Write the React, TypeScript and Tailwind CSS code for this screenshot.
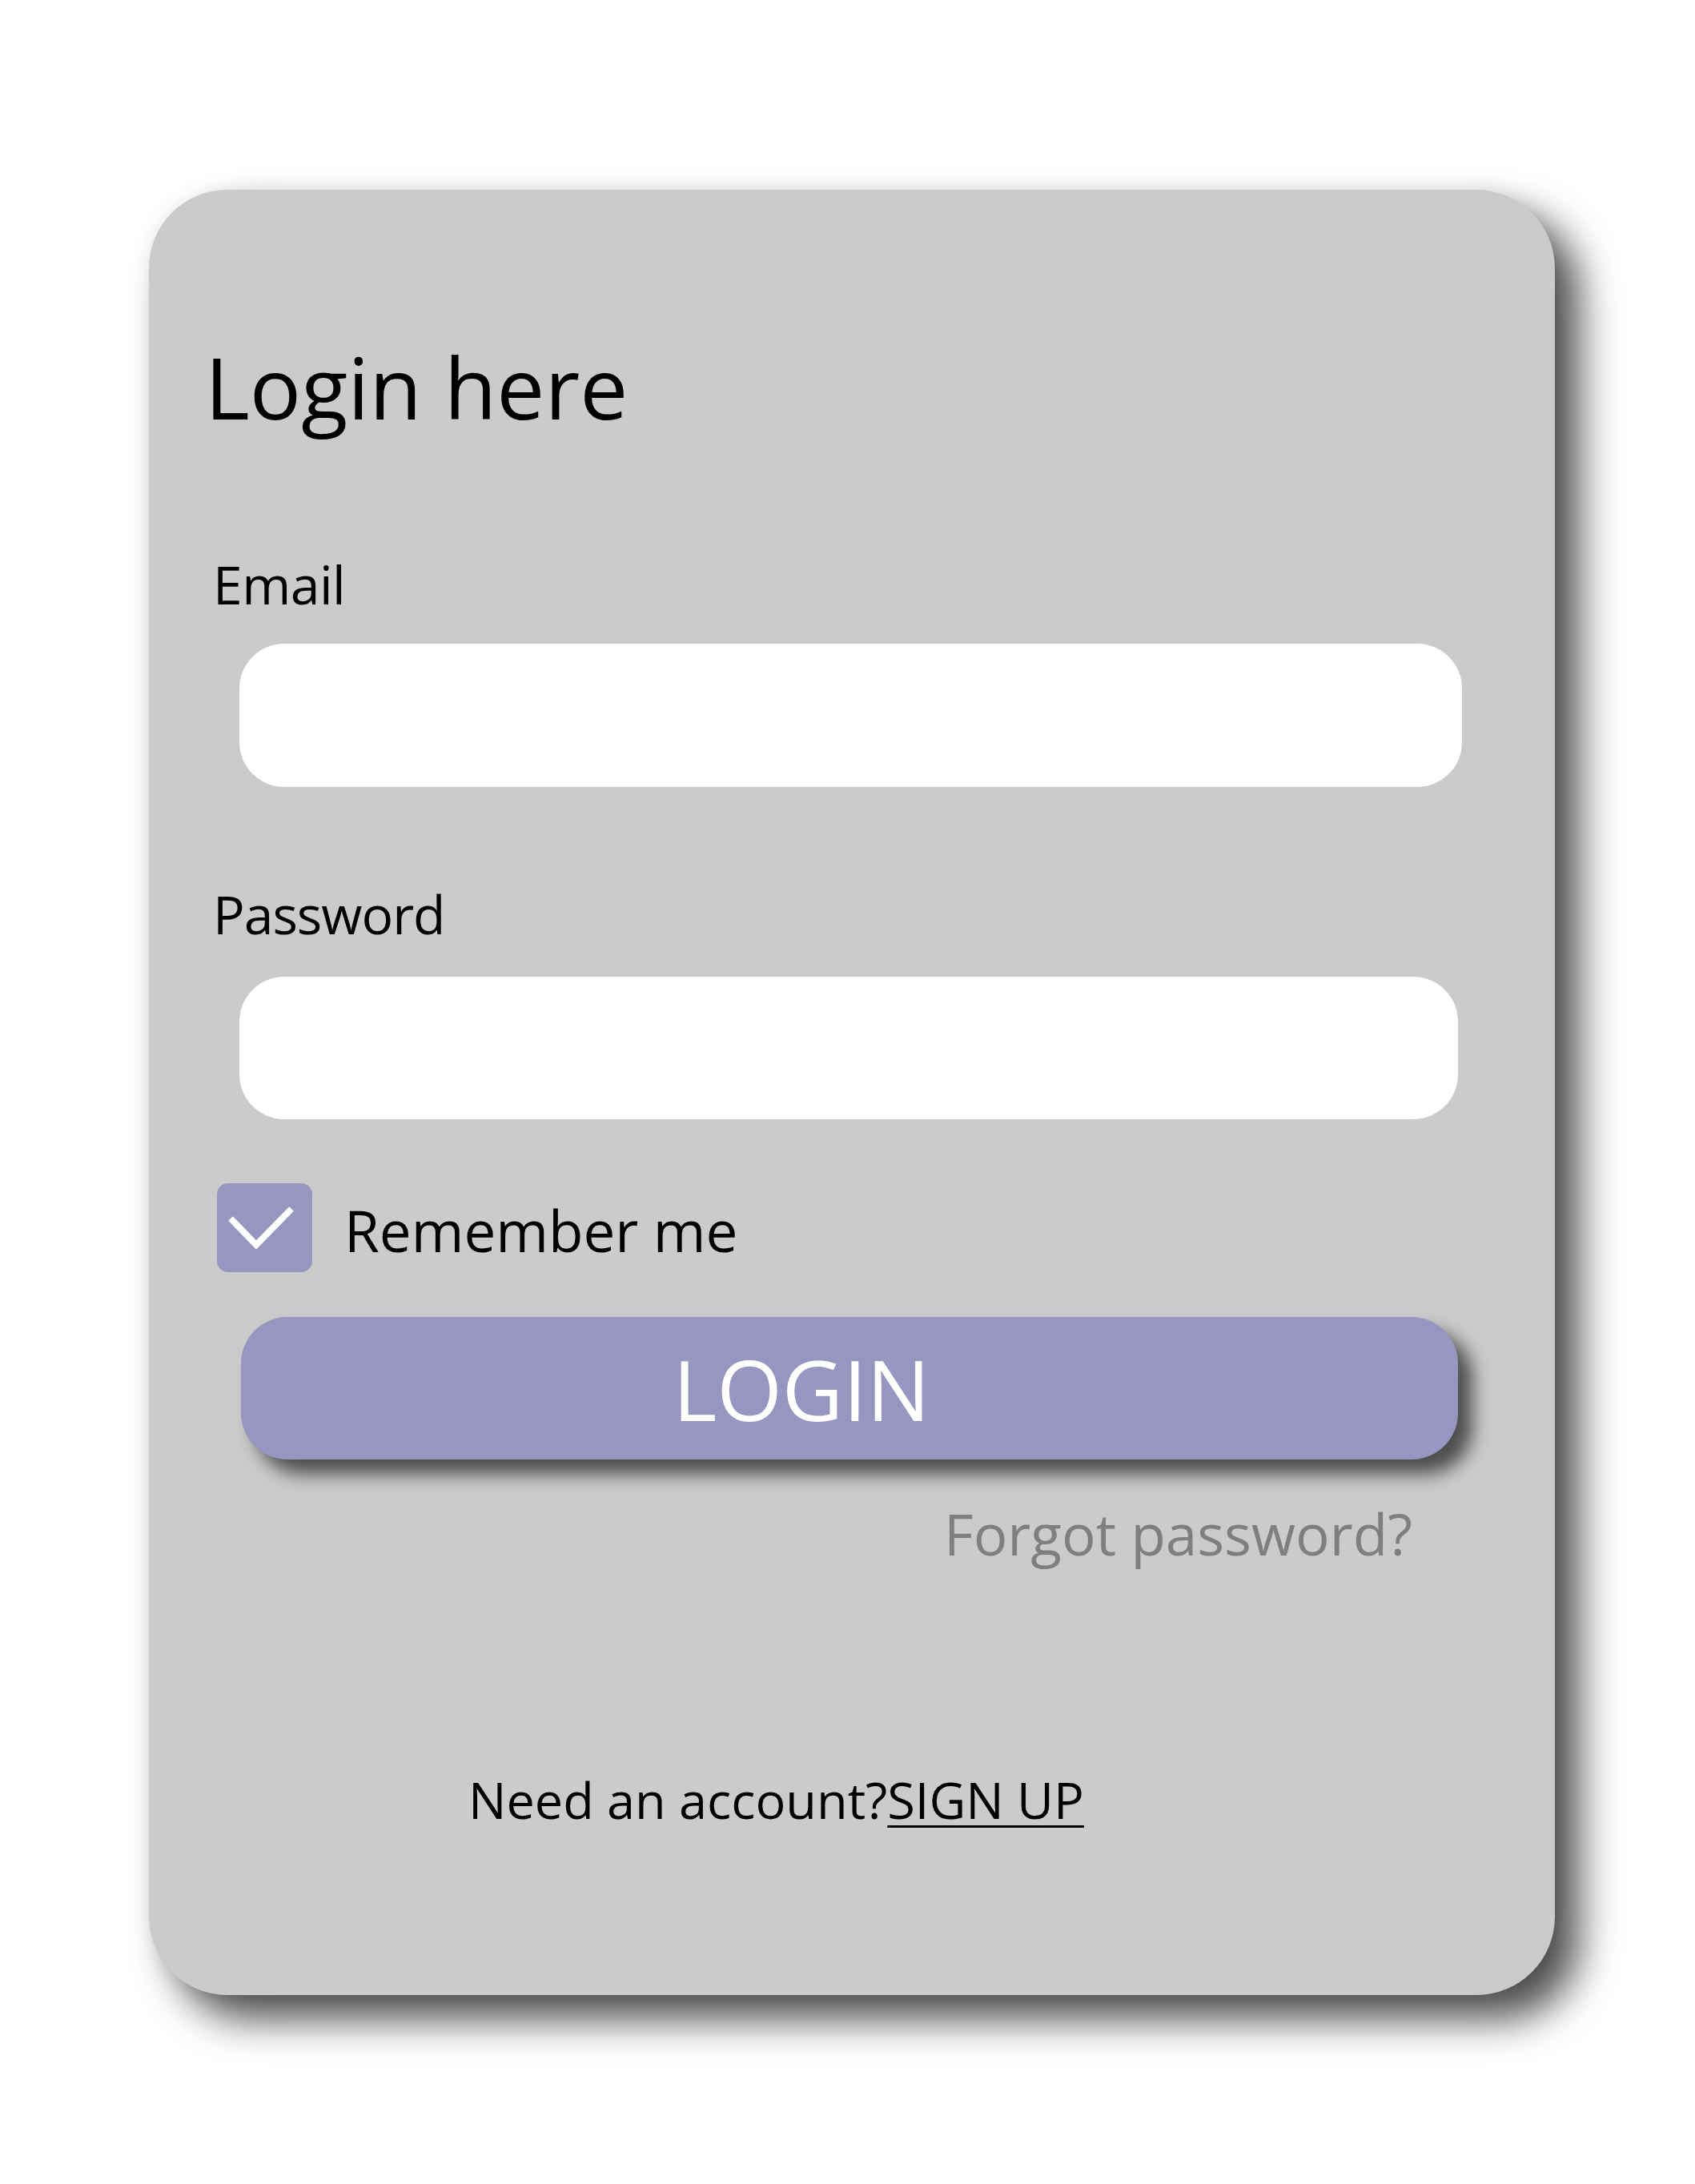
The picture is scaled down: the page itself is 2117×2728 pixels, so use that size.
import React from "react";

const font = { fontFamily: "'Open Sans', 'Noto Sans', sans-serif" };

const CheckBox = () => (
  <div className="w-[119px] h-[111px] shrink-0 rounded-[14px] bg-[#9796c1]">
    <svg width="119" height="111" viewBox="0 0 119 111">
      <polyline
        points="17,44 49,77 93,32"
        fill="none"
        stroke="#ffffff"
        strokeWidth="8"
        strokeLinejoin="miter"
      />
    </svg>
  </div>
);

const App = () => {
  return (
    <div
      className="min-h-screen w-full bg-white pt-[237px] pl-[186px] pb-[236px] text-black"
      style={font}
    >
      <div className="w-[1756px] h-[2255px] rounded-[98px] bg-[#cbcbcb] shadow-[30px_30px_50px_rgba(0,0,0,0.7),0_0_24px_rgba(0,0,0,0.06)] flex flex-col items-start">
        <h1 className="mt-[192px] ml-[70px] text-[107px] leading-[107px] font-normal">
          Login here
        </h1>

        <label className="mt-[160px] ml-[80px] text-[66px] leading-[66px] tracking-[-0.5px]">Email</label>
        <div className="mt-[42px] ml-[113px] w-[1527px] h-[179px] rounded-[56px] bg-white" />

        <label className="mt-[125px] ml-[80px] text-[66px] leading-[66px] tracking-[-1px]">Password</label>
        <div className="mt-[46px] ml-[113px] w-[1522px] h-[178px] rounded-[56px] bg-white" />

        <div className="mt-[80px] ml-[85px] flex items-start gap-[40px]">
          <CheckBox />
          <span className="mt-[23px] text-[71px] leading-[71px]">Remember me</span>
        </div>

        <button className="mt-[56px] ml-[115px] w-[1520px] h-[178px] rounded-[58px] bg-[#9796c1] shadow-[18px_18px_22px_rgba(0,0,0,0.62)] flex items-center justify-center pr-[120px]">
          <span className="text-white text-[105px] leading-[105px]">LOGIN</span>
        </button>

        <a className="mt-[58px] ml-[993px] text-[71px] leading-[70px] text-[#7f7f7f]">
          Forgot password?
        </a>

        <p className="mt-[265px] ml-[399px] text-[63px] leading-[63px]">
          Need an account?
          <a className="underline decoration-[3px] underline-offset-[8px]">SIGN UP</a>
        </p>
      </div>
    </div>
  );
};

export default App;
